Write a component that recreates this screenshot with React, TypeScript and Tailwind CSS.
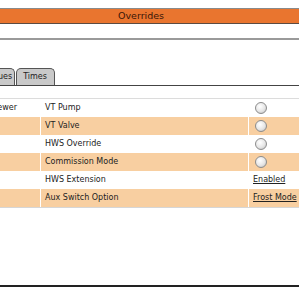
import React from 'react';

// Overrides panel, cropped view of a wider settings page

type Row = {
  left: string;
  label: string;
  kind: 'radio' | 'link';
  value?: string;
};

const rows: Row[] = [
  { left: 'Viewer', label: 'VT Pump', kind: 'radio' },
  { left: '', label: 'VT Valve', kind: 'radio' },
  { left: '', label: 'HWS Override', kind: 'radio' },
  { left: '', label: 'Commission Mode', kind: 'radio' },
  { left: '', label: 'HWS Extension', kind: 'link', value: 'Enabled' },
  { left: '', label: 'Aux Switch Option', kind: 'link', value: 'Frost Mode' },
];

const Radio: React.FC = () => (
  <span className="block h-[12px] w-[12px] rounded-full border border-[#8c8c8c] bg-[radial-gradient(circle_at_40%_35%,#ffffff_0%,#e6e6e6_55%,#b8b8b8_100%)]" />
);

const Tab: React.FC<{ label: string; className?: string }> = ({ label, className }) => (
  <div
    className={
      'flex h-[17px] items-center rounded-t-[5px] border border-b-0 border-[#555] bg-[#c9c9c9] text-[8px] text-[#222] ' +
      (className ?? '')
    }
  >
    {label}
  </div>
);

export default function App() {
  return (
    <div className="h-[300px] w-[300px] overflow-hidden bg-white font-['DejaVu_Sans',Verdana,sans-serif]">
      <div className="-ml-[17px] w-[316px]">
        {/* title bar */}
        <div className="mt-[8px] border-t border-[#8a8a8a]" />
        <div className="flex h-[15px] items-center justify-center border-b border-[#5b4b42] bg-[#e9752f] text-[9.5px] text-[#3a1608]">
          Overrides
        </div>
        <div className="mt-[14px] h-[2px] bg-[#9a9a9a]" />

        {/* tabs */}
        <div className="mt-[28px] flex items-end gap-[1px]">
          <Tab label="Values" className="-ml-[3px] pl-[5px] pr-[2px]" />
          <Tab label="Times" className="pl-[6px] pr-[7px]" />
        </div>
        <div className="h-[1px] bg-[#444]" />

        <div className="mt-[12px] h-[1px] bg-[#dcdcdc]" />

        {/* table */}
        <div className="flex flex-col text-[8px] text-[#222]">
          {rows.map((r, i) => {
            const bg = i % 2 === 1 ? 'bg-[#f8cfa1]' : 'bg-white';
            return (
              <div key={r.label} className="flex h-[18px] gap-[1px]">
                <div className={'flex w-[57px] items-center justify-end pr-[23px] ' + bg}>
                  <span className="whitespace-nowrap">{r.left}</span>
                </div>
                <div className={'flex w-[207px] items-center pl-[4px] ' + bg}>{r.label}</div>
                <div className={'flex flex-1 items-center pl-[4px] ' + bg}>
                  {r.kind === 'radio' ? (
                    <span className="ml-[2px]">
                      <Radio />
                    </span>
                  ) : (
                    <span className="whitespace-nowrap underline">{r.value}</span>
                  )}
                </div>
              </div>
            );
          })}
        </div>
        <div className="h-[1px] bg-[#d6d6d6]" />

        <div className="mt-[77px] h-[2px] bg-[#222]" />
      </div>
    </div>
  );
}
